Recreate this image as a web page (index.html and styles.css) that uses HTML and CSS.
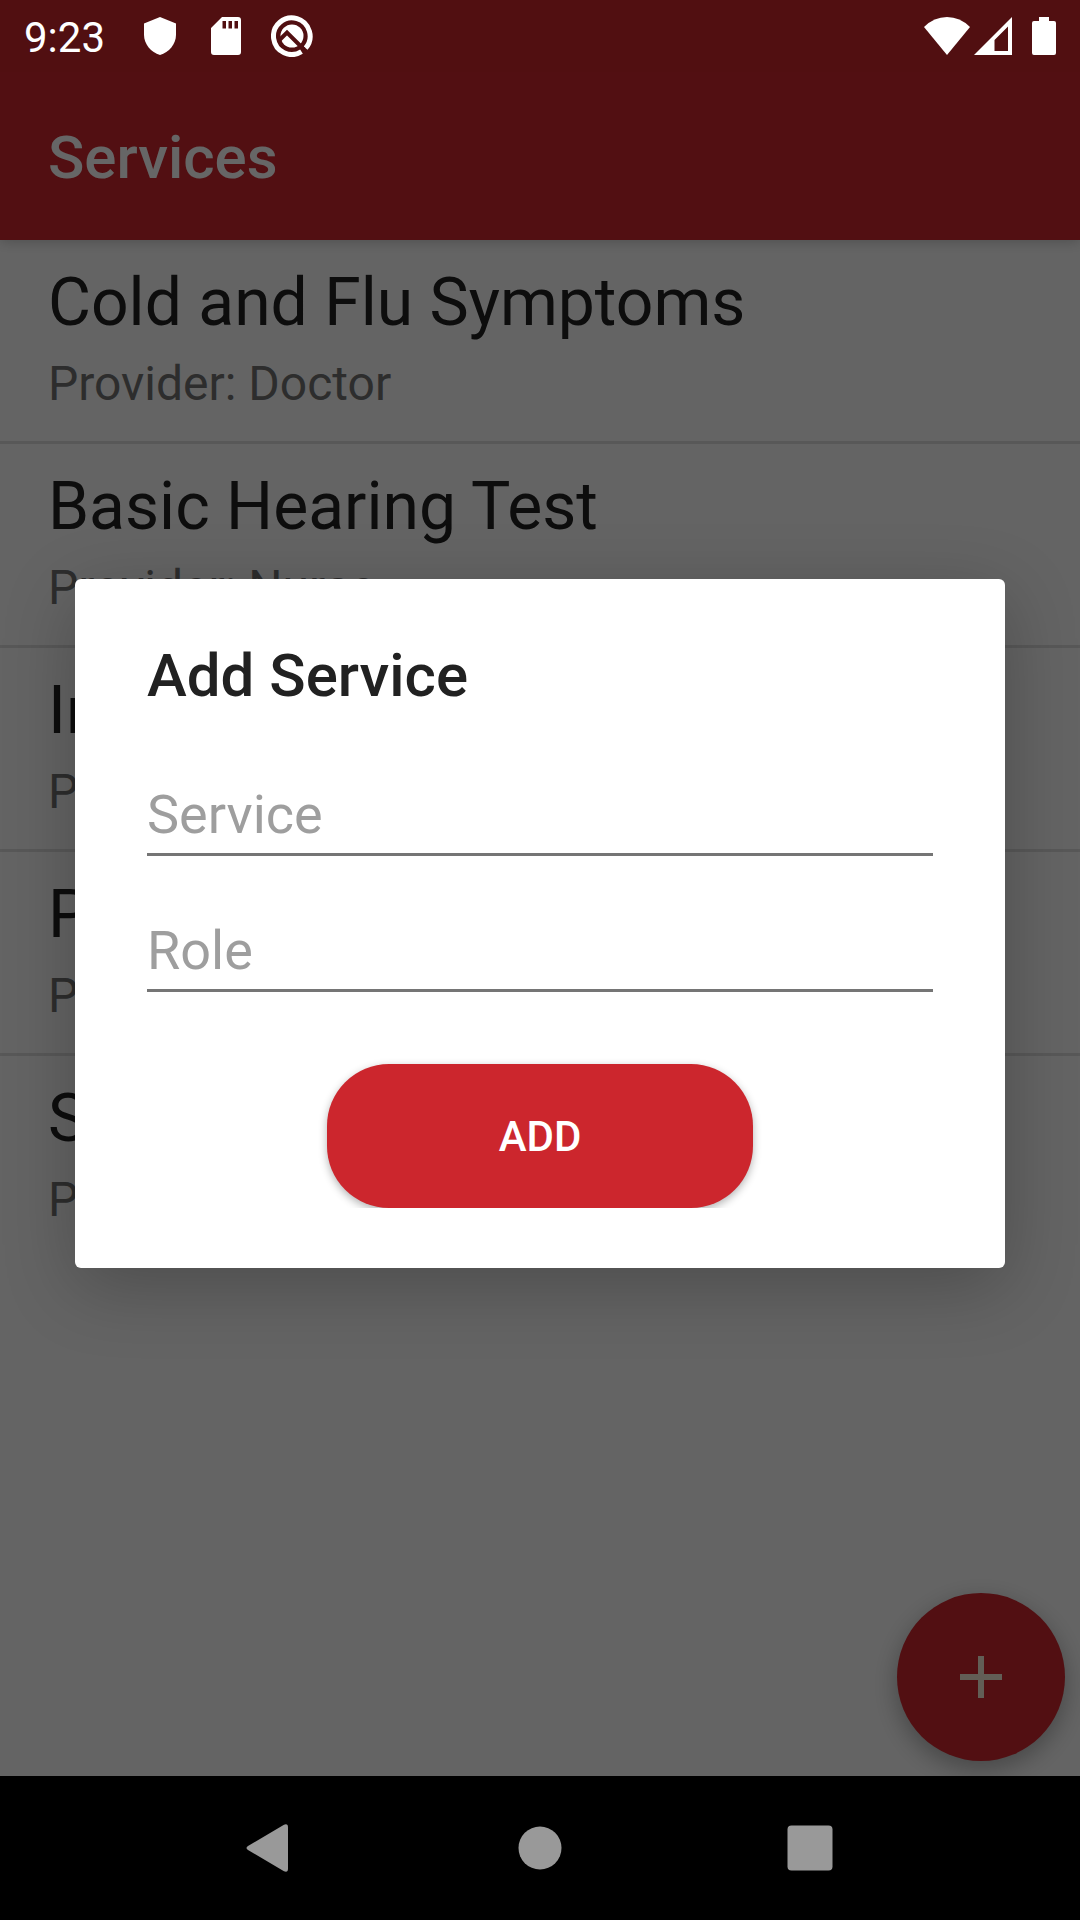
FILE: index.html
```html
<!DOCTYPE html>
<html lang="en">
<head>
<meta charset="utf-8">
<meta name="viewport" content="width=device-width, initial-scale=1">
<title>Services</title>
<link rel="stylesheet" href="styles.css">
</head>
<body>
<div class="screen">
  <div class="status-bar">
    <span class="clock">9:23</span>
    <div class="status-notices">
      <svg width="32" height="38" viewBox="0 0 32 38" aria-hidden="true"><path d="M16 0 32 6.500V18C32 27 25 35.500 16 38 7 35.500 0 27 0 18V6.500Z" fill="#fff"/></svg>
      <svg width="30" height="38" viewBox="0 0 30 38" aria-hidden="true"><path fill-rule="evenodd" d="M11 0H27a3 3 0 0 1 3 3V35a3 3 0 0 1-3 3H3a3 3 0 0 1-3-3V11ZM11.500 4v7.500h3.500V4ZM17.500 4v7.500h3.500V4ZM23.500 4v7.500h3.500V4Z" fill="#fff"/></svg>
      <svg class="q-icon" width="42" height="42" viewBox="0 0 42 42" aria-hidden="true">
        <path d="M34.600 33.200A18.300 18.300 0 1 0 30.500 36.700" fill="none" stroke="#fff" stroke-width="5"/>
        <circle cx="21" cy="21" r="11.500" fill="#fff"/>
        <path d="M8 25.500 16 17.500 33 34.500" fill="none" stroke="#510f11" stroke-width="4"/>
      </svg>
    </div>
    <div class="status-system">
      <svg width="46" height="38" viewBox="0 0 46 38" aria-hidden="true"><path d="M0 10Q10 0 23 0T46 10L23 38Z" fill="#fff"/></svg>
      <svg width="38" height="38" viewBox="0 0 38 38" aria-hidden="true"><path fill-rule="evenodd" d="M38 0V38H0ZM34 9.500 20.500 23V34H34Z" fill="#fff"/></svg>
      <svg class="battery" width="24" height="38" viewBox="0 0 24 38" aria-hidden="true"><path d="M7 0H17V4H22a2 2 0 0 1 2 2V36a2 2 0 0 1-2 2H2a2 2 0 0 1-2-2V6a2 2 0 0 1 2-2H7Z" fill="#fff"/></svg>
    </div>
  </div>

  <header class="app-bar"><h1 class="app-title">Services</h1></header>

  <main class="content">
    <ul class="service-list">
      <li class="service"><span class="service-name">Cold and Flu Symptoms</span><span class="service-role">Provider: Doctor</span></li>
      <li class="service"><span class="service-name">Basic Hearing Test</span><span class="service-role">Provider: Nurse</span></li>
      <li class="service"><span class="service-name">Injections</span><span class="service-role">Provider: Nurse</span></li>
      <li class="service"><span class="service-name">Physical Exam</span><span class="service-role">Provider: Doctor</span></li>
      <li class="service"><span class="service-name">Stitches</span><span class="service-role">Provider: Doctor</span></li>
    </ul>
    <button class="fab" type="button" aria-label="New service">
      <svg width="42" height="42" viewBox="0 0 42 42" aria-hidden="true"><path d="M18 0h6v18h18v6H24v18h-6V24H0v-6h18Z" fill="#f5ecd8"/></svg>
    </button>
  </main>

  <nav class="nav-bar" aria-label="System">
    <button class="nav-button" type="button" aria-label="Back"><svg width="48" height="48" viewBox="0 0 48 48" aria-hidden="true"><path d="M2 22 38 .700Q42-1 42 3.500V44.500Q42 49 38 47.300L2 26Q-1 24 2 22Z" fill="#999"/></svg></button>
    <button class="nav-button" type="button" aria-label="Home"><svg width="48" height="48" viewBox="0 0 48 48" aria-hidden="true"><circle cx="24" cy="24" r="21.500" fill="#999"/></svg></button>
    <button class="nav-button" type="button" aria-label="Recent apps"><svg width="48" height="48" viewBox="0 0 48 48" aria-hidden="true"><rect x="1.500" y="1.500" width="45" height="45" rx="4" fill="#999"/></svg></button>
  </nav>

  <div class="overlay">
    <form class="dialog" role="dialog" aria-labelledby="dialog-title">
      <h2 class="dialog-title" id="dialog-title">Add Service</h2>
      <div class="fields">
        <input class="field" type="text" placeholder="Service" aria-label="Service">
        <input class="field" type="text" placeholder="Role" aria-label="Role">
      </div>
      <button class="add-button" type="button">ADD</button>
    </form>
  </div>
</div>
</body>
</html>
```
FILE: styles.css
```css
* {
  box-sizing: border-box;
}

body {
  margin: 0;
  font-family: Roboto, "Liberation Sans", sans-serif;
  color: #212121;
}

h1, h2, ul {
  margin: 0;
  padding: 0;
}

button {
  border: 0;
  padding: 0;
  font-family: inherit;
}

svg {
  display: block;
}

.screen {
  position: relative;
  min-height: 100vh;
  display: flex;
  flex-direction: column;
  background: #fafafa;
}

/* System status bar: its icons stay bright above the dimmed page */
.status-bar {
  height: 72px;
  padding: 0 24px;
  display: flex;
  align-items: center;
  background: #510f11;
  color: #fff;
  position: relative;
  z-index: 3;
}

.clock {
  width: 120px;
  padding-top: 3px;
  font-size: 42px;
  line-height: 48px;
}

.status-notices {
  display: flex;
  align-items: center;
  gap: 35px;
}

.q-icon {
  margin-left: -5px;
}

.status-system {
  margin-left: auto;
  display: flex;
  align-items: center;
  gap: 4px;
}

.battery {
  margin-left: 16px;
}

.app-bar {
  height: 168px;
  padding: 4px 48px 0;
  display: flex;
  align-items: center;
  background: #cc262d;
  box-shadow: 0 2px 12px rgba(0, 0, 0, 0.2);
  position: relative;
  z-index: 1;
}

.app-title {
  color: #fff;
  font-size: 60px;
  line-height: 72px;
  font-weight: 500;
}

.content {
  flex: 1;
  position: relative;
  overflow: hidden;
  display: flex;
  flex-direction: column;
}

.service-list {
  list-style: none;
}

.service {
  padding: 24px 48px 29px;
  display: flex;
  flex-direction: column;
  gap: 15px;
}

.service + .service {
  border-top: 3px solid #dcdcdc;
}

.service-name {
  font-size: 66px;
  line-height: 77px;
}

.service-role {
  color: #717171;
  font-size: 48px;
  line-height: 56px;
}

.fab {
  position: absolute;
  right: 15px;
  bottom: 15px;
  width: 168px;
  height: 168px;
  border-radius: 50%;
  display: grid;
  place-items: center;
  background: #cc262d;
  box-shadow: 0 8px 24px rgba(0, 0, 0, 0.3);
}

.nav-bar {
  height: 144px;
  padding: 0 12.5%;
  display: grid;
  grid-template-columns: repeat(3, 1fr);
  background: #000;
  position: relative;
  z-index: 3;
}

.nav-button {
  display: grid;
  place-items: center;
  background: transparent;
}

.overlay {
  position: absolute;
  inset: 0;
  z-index: 2;
  padding: 72px 75px 145px;
  display: grid;
  align-items: center;
  background: rgba(0, 0, 0, 0.6);
}

.dialog {
  padding: 62px 72px 60px;
  display: flex;
  flex-direction: column;
  gap: 72px;
  border-radius: 6px;
  background: #fff;
  box-shadow: 0 18px 72px rgba(0, 0, 0, 0.24);
}

.dialog-title {
  font-size: 60px;
  line-height: 70px;
  font-weight: 500;
}

.fields {
  display: flex;
  flex-direction: column;
  gap: 63px;
}

.field {
  width: 100%;
  height: 73px;
  padding: 0 0 8px;
  border: 0;
  border-bottom: 3px solid #757575;
  border-radius: 0;
  outline: 0;
  background: transparent;
  color: inherit;
  font-family: inherit;
  font-size: 54px;
  line-height: 62px;
}

.field::placeholder {
  color: #9e9e9e;
  opacity: 1;
}

.add-button {
  align-self: center;
  width: 426px;
  height: 144px;
  padding-top: 2px;
  border-radius: 62px;
  background: #cc262d;
  color: #fff;
  font-size: 42px;
  line-height: 48px;
  font-weight: 500;
  box-shadow: 0 3px 8px rgba(0, 0, 0, 0.3);
  clip-path: inset(-16px -16px 0);
}
```
